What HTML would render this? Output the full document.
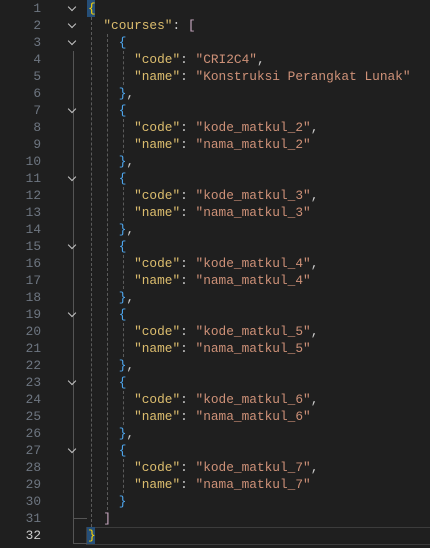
<!DOCTYPE html><html><head><style>
body{margin:0;width:430px;height:548px;background:#1f1f1f;overflow:hidden;font-family:"Liberation Mono",monospace;font-size:12.8px;position:relative}
.l{position:absolute;left:0;height:17px;line-height:17px;width:430px;white-space:pre}
.n{position:absolute;right:389px;color:#6e7681;text-align:right}
.c{position:absolute;left:88px;color:#cccccc}
.k{color:#dcbd6e}.v{color:#ce9178}.b1{color:#ffd700}.b2{color:#c8a8c0}.b3{color:#4fa8f0}
.g{position:absolute;width:0;border-left:1px dashed #5a5a5a}
.chev{position:absolute;left:69px;width:5px;height:5px;border-right:1.3px solid #c5c5c5;border-bottom:1.3px solid #c5c5c5;transform:rotate(45deg)}
</style></head><body>
<div style="position:absolute;left:86px;top:527px;width:350px;height:16px;border:1px solid #3c3c3c;border-right:none"></div>
<div style="position:absolute;left:87px;top:0;width:8px;height:17px;background:#264f78"></div>
<div style="position:absolute;left:87px;top:527px;width:8px;height:17px;background:#264f78"></div>
<div style="position:absolute;left:73px;top:51px;width:1px;height:493px;background:#555"></div>
<div style="position:absolute;left:73px;top:518px;width:14px;height:1px;background:#555"></div>
<div style="position:absolute;left:73px;top:543px;width:14px;height:1px;background:#555"></div>
<div class="g" style="left:91px;top:17px;height:510px"></div>
<div class="g" style="left:107px;top:34px;height:476px"></div>
<div id="x"></div>
<script>
var L=[
'<span class="b1">{</span>',
'  <span class="k">"courses"</span>: <span class="b2">[</span>'];
var vals=[['CRI2C4','Konstruksi Perangkat Lunak']];
for(var i=2;i<=7;i++)vals.push(['kode_matkul_'+i,'nama_matkul_'+i]);
vals.forEach(function(v,j){
L.push('    <span class="b3">{</span>');
L.push('      <span class="k">"code"</span>: <span class="v">"'+v[0]+'"</span>,');
L.push('      <span class="k">"name"</span>: <span class="v">"'+v[1]+'"</span>');
L.push('    <span class="b3">}</span>'+(j<6?',':''));
});
L.push('  <span class="b2">]</span>');
L.push('<span class="b1">}</span>');
var h='';
L.forEach(function(s,i){
var t=i*17;
h+='<div class="l" style="top:'+t+'px"><span class="n" style="'+(i==31?'color:#cccccc':'')+'">'+(i+1)+'</span><span class="c">'+s+'</span></div>';
if(s.indexOf('b3">{')>0||i<2)h+='<div class="chev" style="top:'+(t+4)+'px"></div>';
if(s.indexOf('b3">{')>0)h+='<div class="g" style="left:123px;top:'+(t+17)+'px;height:34px"></div>';
});
document.getElementById('x').innerHTML=h;
</script>
</body></html>
